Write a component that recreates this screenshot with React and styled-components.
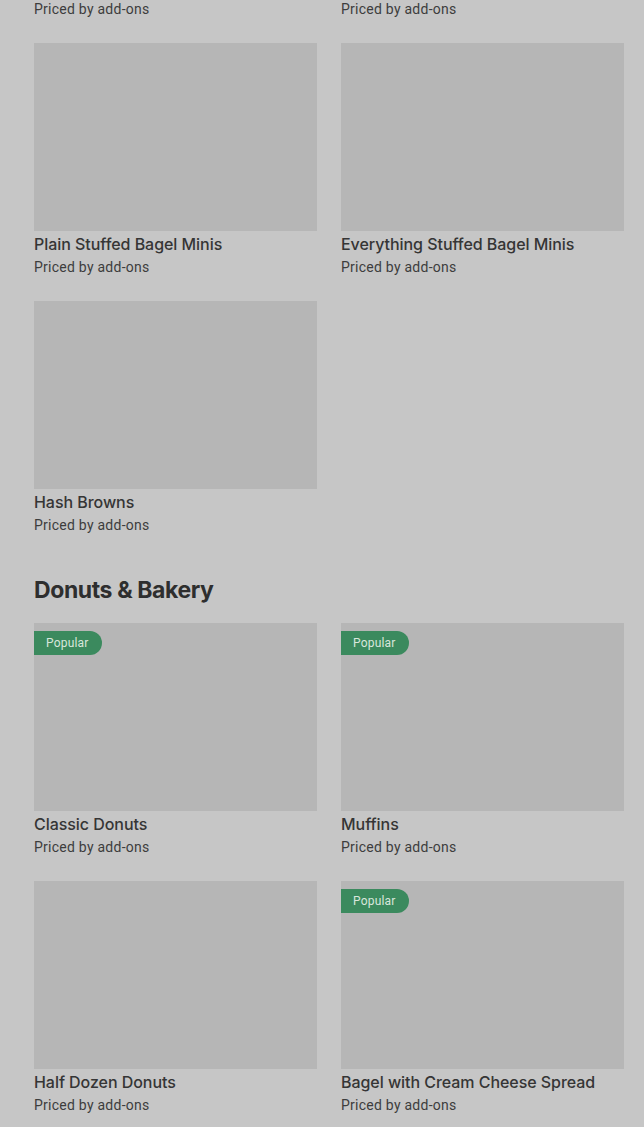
import React from 'react';
import styled, { createGlobalStyle } from 'styled-components';

const Global = createGlobalStyle`
  html, body {
    margin: 0;
    padding: 0;
    background: #c6c6c6;
    overflow: hidden;
  }
  body {
    font-family: Inter, "Liberation Sans", sans-serif;
    color: #353535;
  }
`;

const Page = styled.main`
  margin-top: -215px;
  padding: 0 20px 40px 34px;
`;

const Section = styled.section`
  & + & {
    margin-top: 39px;
  }
`;

const Heading = styled.h2`
  margin: 0 0 17px;
  font-size: 23px;
  line-height: 32px;
  font-weight: 700;
  letter-spacing: -0.4px;
  color: #2e2e2e;
`;

const Grid = styled.div`
  display: grid;
  grid-template-columns: 283px 283px;
  column-gap: 24px;
  row-gap: 24px;
`;

const Card = styled.div`
  display: flex;
  flex-direction: column;
`;

const Thumb = styled.div`
  position: relative;
  height: 188px;
  background: #b6b6b6;
`;

const Badge = styled.span`
  position: absolute;
  top: 8px;
  left: 0;
  height: 24px;
  padding: 0 13px 0 12px;
  display: flex;
  align-items: center;
  border-radius: 0 12px 12px 0;
  background: #3b8a5e;
  color: #d8e6dc;
  font-family: Roboto, "Liberation Sans", sans-serif;
  font-size: 12px;
  letter-spacing: 0.2px;
`;

const Title = styled.div`
  margin-top: 1px;
  font-size: 16px;
  line-height: 24px;
  font-weight: 500;
  letter-spacing: -0.05px;
  color: #353535;
`;

const Sub = styled.div`
  margin-top: 1px;
  font-family: Roboto, "Liberation Sans", sans-serif;
  font-size: 14px;
  line-height: 20px;
  letter-spacing: 0.25px;
  color: #3d3d3d;
`;

const Item = ({ name, popular }) => (
  <Card>
    <Thumb>{popular && <Badge>Popular</Badge>}</Thumb>
    <Title>{name}</Title>
    <Sub>Priced by add-ons</Sub>
  </Card>
);

const breakfast = [
  { name: 'Bagel Minis' },
  { name: 'Cinnamon Bagel Minis' },
  { name: 'Plain Stuffed Bagel Minis' },
  { name: 'Everything Stuffed Bagel Minis' },
  { name: 'Hash Browns' },
];

const bakery = [
  { name: 'Classic Donuts', popular: true },
  { name: 'Muffins', popular: true },
  { name: 'Half Dozen Donuts' },
  { name: 'Bagel with Cream Cheese Spread', popular: true },
];

export default function App() {
  return (
    <>
      <Global />
      <Page>
        <Section>
          <Grid>
            {breakfast.map((it) => <Item key={it.name} {...it} />)}
          </Grid>
        </Section>
        <Section>
          <Heading>Donuts &amp; Bakery</Heading>
          <Grid>
            {bakery.map((it) => <Item key={it.name} {...it} />)}
          </Grid>
        </Section>
      </Page>
    </>
  );
}
